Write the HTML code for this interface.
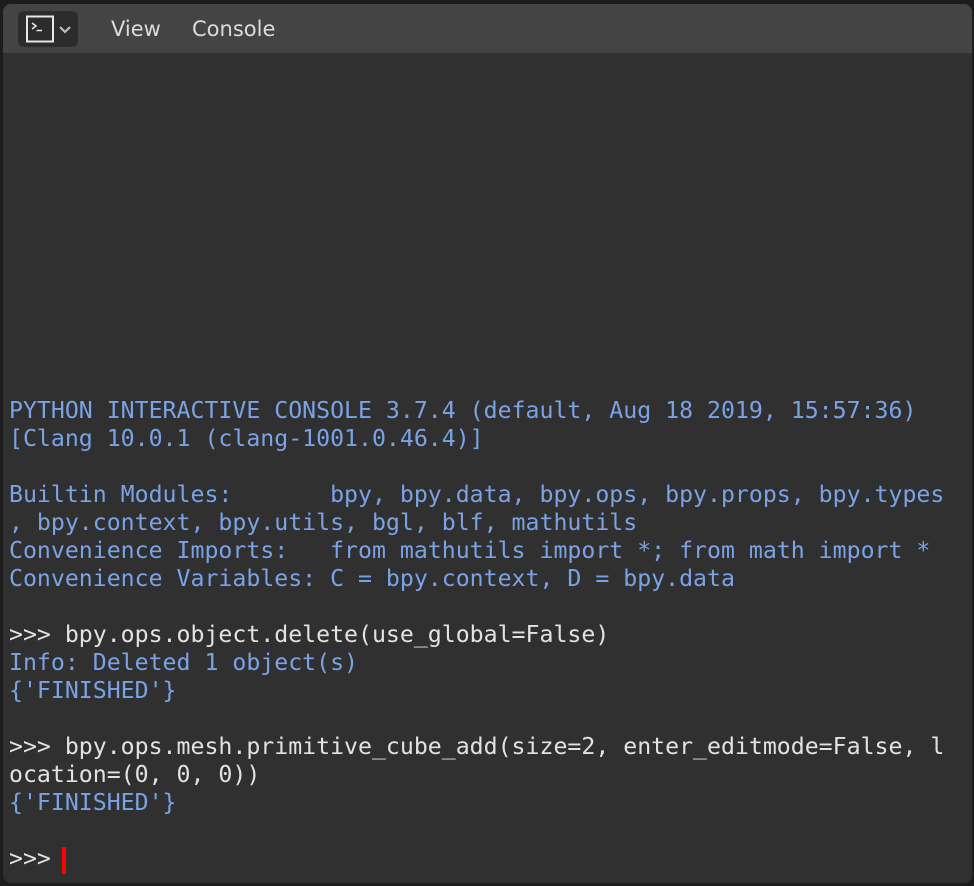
<!DOCTYPE html>
<html><head><meta charset="utf-8"><style>
html,body{margin:0;padding:0;background:#1d1d1d;width:974px;height:886px;overflow:hidden}
.panel{position:absolute;left:3px;top:4px;width:969px;height:879px;background:#303030;border-radius:8px;overflow:hidden}
.hdr{position:absolute;left:0;top:0;width:100%;height:49px;background:#444444}
.btn{position:absolute;left:15px;top:7px;width:60px;height:36px;background:#2c2c2c;border-radius:6px}
.menu{position:absolute;top:13px;font:21px "DejaVu Sans","Liberation Sans",sans-serif;color:#dcdcdc}
pre{position:absolute;left:9px;top:397px;margin:0;font:23.2px/28px "DejaVu Sans Mono","Liberation Mono",monospace;color:#e2e2e2;white-space:pre}
.b{color:#7aa3e6}
.cur{position:absolute;left:62px;top:847px;width:4px;height:27px;background:#f00}
</style></head><body>
<div class="panel">
<div class="hdr">
<div class="btn">
<svg width="60" height="36" viewBox="0 0 60 36">
<rect x="9" y="5.5" width="26" height="25" fill="none" stroke="#e6e6e6" stroke-width="2"/>
<path d="M14 12 L18 15 L14 18" fill="none" stroke="#e6e6e6" stroke-width="1.6"/>
<path d="M18.5 19.5 H24" stroke="#e6e6e6" stroke-width="1.6"/>
<path d="M42 16 L47 21 L52 16" fill="none" stroke="#bdbdbd" stroke-width="2.2"/>
</svg>
</div>
<div class="menu" style="left:108px">View</div>
<div class="menu" style="left:189px">Console</div>
</div>
</div>
<pre><span class="b">PYTHON INTERACTIVE CONSOLE 3.7.4 (default, Aug 18 2019, 15:57:36)
[Clang 10.0.1 (clang-1001.0.46.4)]

Builtin Modules:       bpy, bpy.data, bpy.ops, bpy.props, bpy.types
, bpy.context, bpy.utils, bgl, blf, mathutils
Convenience Imports:   from mathutils import *; from math import *
Convenience Variables: C = bpy.context, D = bpy.data
</span>
&gt;&gt;&gt; bpy.ops.object.delete(use_global=False)
<span class="b">Info: Deleted 1 object(s)
{'FINISHED'}</span>

&gt;&gt;&gt; bpy.ops.mesh.primitive_cube_add(size=2, enter_editmode=False, l
ocation=(0, 0, 0))
<span class="b">{'FINISHED'}</span>

&gt;&gt;&gt; </pre>
<div class="cur"></div>
</body></html>
